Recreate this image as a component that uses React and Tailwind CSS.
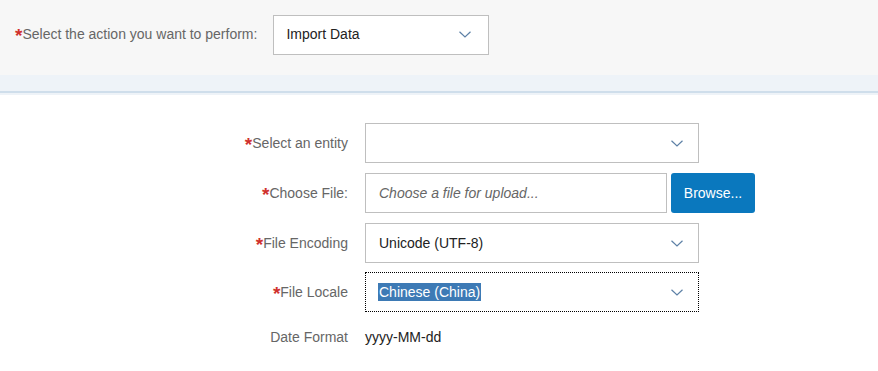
import React from 'react';

const Chevron = () => (
  <svg width="12" height="7" viewBox="0 0 12 7" className="shrink-0">
    <path d="M0.5 0.8 L6 6 L11.5 0.8" fill="none" stroke="#5d80a6" strokeWidth="1.2" />
  </svg>
);

const Req = () => <span className="text-[#d0312d] text-[19px] font-bold leading-none relative top-[1px]">*</span>;

function FormRow({ label, required, children }) {
  return (
    <div className="flex items-center h-[40px]">
      <div className="w-[348px] flex justify-end items-center text-[14px] text-[#666]">
        {required && <Req />}
        <span>{label}</span>
      </div>
      <div className="ml-[17px] flex items-center">{children}</div>
    </div>
  );
}

function App() {
  return (
    <div className="w-[878px] h-[371px] bg-white overflow-hidden" style={{ fontFamily: '"Liberation Sans", Arial, sans-serif' }}>
      {/* Header */}
      <div className="h-[75px] bg-[#f7f7f7] flex items-center pl-[15px] pb-[6px]">
        <div className="flex items-center text-[14px] text-[#666]">
          <Req />
          <span>Select the action you want to perform:</span>
        </div>
        <div className="ml-[16px] w-[216px] h-[40px] border border-[#bfbfbf] bg-white flex items-center justify-between pl-[12px] pr-[17px] text-[14px] text-[#222]">
          <span>Import Data</span>
          <Chevron />
        </div>
      </div>
      <div className="h-[16px] bg-[#eef3f8]" />
      <div className="h-[2px] bg-[#cfdeeb]" />
      <div className="h-[2px] bg-[#eef3f8]" />

      {/* Form */}
      <div className="pt-[28px] flex flex-col gap-[10px]">
        <FormRow label="Select an entity" required>
          <div className="w-[334px] h-[40px] border border-[#bfbfbf] flex items-center justify-end pr-[15px]">
            <Chevron />
          </div>
        </FormRow>
        <FormRow label="Choose File:" required>
          <div className="w-[302px] h-[40px] border border-[#bfbfbf] flex items-center pl-[13px] text-[14px] italic text-[#666]">
            Choose a file for upload...
          </div>
          <button className="ml-[4px] w-[84px] h-[40px] rounded-[3px] bg-[#0a78be] text-white text-[14px]">Browse...</button>
        </FormRow>
        <FormRow label="File Encoding" required>
          <div className="w-[334px] h-[40px] border border-[#bfbfbf] flex items-center justify-between pl-[13px] pr-[15px] text-[14px] text-[#222]">
            <span>Unicode (UTF-8)</span>
            <Chevron />
          </div>
        </FormRow>
        <div className="-mt-[1px]">
          <FormRow label="File Locale" required>
            <div className="w-[334px] h-[40px] border border-dotted border-black flex items-center justify-between pl-[12px] pr-[15px] text-[14px]">
              <span className="bg-[#3d7ab5] text-white px-[1px] leading-[18px]">Chinese (China)</span>
              <Chevron />
            </div>
          </FormRow>
        </div>
        <div className="-mt-[5px]">
          <FormRow label="Date Format">
            <span className="text-[14px] text-[#222]">yyyy-MM-dd</span>
          </FormRow>
        </div>
      </div>
    </div>
  );
}

export default App;
